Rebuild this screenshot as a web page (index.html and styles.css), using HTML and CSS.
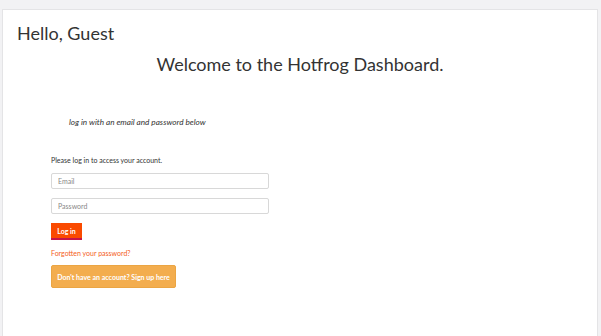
FILE: index.html
```html
<!DOCTYPE html>
<html lang="en">
<head>
  <meta charset="UTF-8" />
  <meta name="viewport" content="width=device-width, initial-scale=1.0" />
  <title>Hotfrog Dashboard</title>
  <link rel="stylesheet" href="styles.css">
</head>
<body>
  <div class="page">
    <h2 class="greeting">Hello, Guest</h2>
    <h1 class="welcome">Welcome to the Hotfrog Dashboard.</h1>
    <p class="hint">log in with an email and password below</p>

    <form class="login">
      <p class="intro">Please log in to access your account.</p>
      <input type="text" placeholder="Email" />
      <input type="password" placeholder="Password" />
      <button type="button" class="btn-login">Log in</button>
      <a href="#" class="forgot">Forgotten your password?</a>
      <button type="button" class="btn-signup">Don't have an account? Sign up here</button>
    </form>
  </div>
</body>
</html>
```

FILE: styles.css
```css
body {
  margin: 0;
  padding: 9px 3px 0 2px;
  background: #f2f2f4;
  font-family: Lato, sans-serif;
  color: #333;
}
.page {
  background: #fff;
  border: 1px solid #e4e4e6;
  height: 340px;
  padding: 0 14px;
}
.greeting {
  font-size: 18px;
  font-weight: normal;
  margin: 11px 0 0;
  line-height: 24px;
}
.welcome {
  font-size: 18px;
  font-weight: normal;
  text-align: center;
  margin: 6px 0 0;
  line-height: 26px;
}
.hint {
  font-size: 8.2px;
  font-style: italic;
  margin: 40px 0 0 52px;
}
.login {
  margin: 29px 0 0 34px;
  display: flex;
  flex-direction: column;
  align-items: flex-start;
}
.intro {
  font-size: 7px;
  margin: 0 0 9px;
}
.login input {
  width: 218px;
  height: 16px;
  box-sizing: border-box;
  border: 1px solid #d8d8d8;
  border-radius: 2px;
  padding: 0 6px;
  font-family: inherit;
  font-size: 7px;
  margin-bottom: 9px;
}
.login input::placeholder {
  color: #888;
}
.btn-login {
  background: #fa4a00;
  color: #fff;
  border: none;
  border-bottom: 2px solid #c4154a;
  height: 17px;
  width: 31px;
  padding: 0;
  font-family: inherit;
  font-size: 7px;
  font-weight: bold;
}
.forgot {
  color: #f45d23;
  text-decoration: none;
  font-size: 7px;
  margin-top: 9px;
}
.btn-signup {
  margin-top: 8px;
  background: #f3ad4e;
  border: 1px solid #eba543;
  border-radius: 2px;
  color: #fff;
  font-family: inherit;
  font-size: 7px;
  font-weight: bold;
  white-space: nowrap;
  height: 23px;
  width: 125px;
  padding: 0;
}
```
